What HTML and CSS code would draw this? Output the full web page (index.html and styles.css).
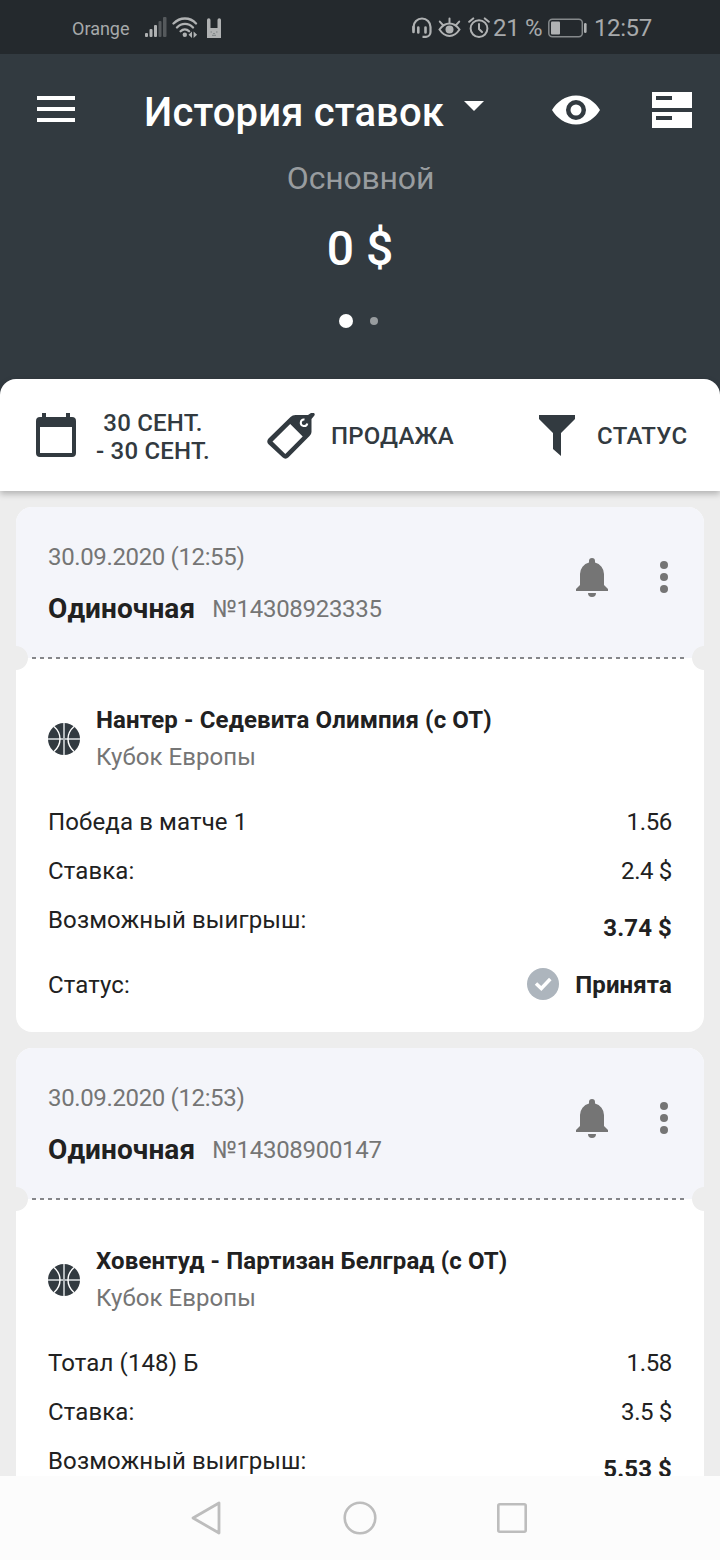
FILE: index.html
```html
<!DOCTYPE html>
<html lang="ru">
<head>
<meta charset="utf-8">
<title>История ставок</title>
<link rel="stylesheet" href="styles.css">
</head>
<body>
<svg class="defs" width="0" height="0" aria-hidden="true">
  <symbol id="ball" viewBox="0 0 32 32">
    <circle cx="16" cy="16" r="16" fill="#323a40"/>
    <path d="M16 0v32M0 16h32" stroke="#b3b8bb" stroke-width="2" fill="none"/>
    <path d="M6 3.500c8 7 8 18 0 25M26 3.500c-8 7-8 18 0 25" stroke="#fff" stroke-width="1.400" fill="none"/>
  </symbol>
  <symbol id="bell" viewBox="0 0 32 39">
    <path d="M16 0a3 3 0 0 1 3 3v1.400A12 12 0 0 1 28 16v11l4 4v2H0v-2l4-4V16A12 12 0 0 1 13 4.400V3a3 3 0 0 1 3-3zM12 35h8a4 4 0 0 1-8 0z" fill="#757575"/>
  </symbol>
  <symbol id="more" viewBox="0 0 8 32">
    <g fill="#757575"><circle cx="4" cy="4" r="4"/><circle cx="4" cy="16" r="4"/><circle cx="4" cy="28" r="4"/></g>
  </symbol>
</svg>
<div class="screen">
  <header class="statusbar">
    <span class="carrier">Orange</span>
    <svg class="ic-signal" width="22" height="22" viewBox="0 0 22 22"><g fill="#b0b2b3"><rect x="0" y="16" width="3" height="4" rx="1"/><rect x="4.500" y="12" width="3" height="8" rx="1"/><rect x="9" y="8" width="3" height="12" rx="1"/></g><g fill="#55595c"><rect x="13.500" y="4" width="3" height="16" rx="1"/><rect x="18" y="0" width="3.500" height="20" rx="1"/></g></svg>
    <svg class="ic-wifi" width="26" height="22" viewBox="0 0 26 22"><g fill="none" stroke="#b0b2b3" stroke-width="2.300" stroke-linecap="round"><path d="M1.500 6.500C8-.2 18-.2 24 6.500M5 10.500c4.500-4.800 11.500-4.800 16 0M8.600 14.300c2.500-2.500 6-2.500 8.500 0"/></g><circle cx="12.800" cy="17.800" r="2.200" fill="#b0b2b3"/><path d="M20 14.500v6.500l-3.500-3.250zM21.600 14.500v6.500l3.500-3.250z" fill="#b0b2b3"/></svg>
    <svg class="ic-bunny" width="16" height="22" viewBox="0 0 16 22"><path d="M1 21V3a1.500 1.500 0 0 1 3.500 0v8h7V3A1.500 1.500 0 0 1 15 3v18z" fill="#b0b2b3"/><path d="M4.500 15H6M10 15h1.500M7.200 16.500h1.600M6 18.300h4" stroke="#7b8083" stroke-width="1"/></svg>
    <svg class="ic-headset" width="20" height="22" viewBox="0 0 20 22"><path d="M1.500 13.500V10a8.500 8.500 0 0 1 17 0v5a4.800 4.800 0 0 1-4.500 4.800H10.500" fill="none" stroke="#b0b2b3" stroke-width="2.200"/><path d="M1.500 10v5M6.300 10.500v5M13.500 10.500v5" stroke="#b0b2b3" stroke-width="2.600" stroke-linecap="round"/></svg>
    <svg class="ic-care" width="23" height="22" viewBox="0 0 23 22"><g fill="none" stroke="#b0b2b3" stroke-width="2" stroke-linecap="round"><path d="M1.500 12.500c5.500-8 14.500-8 20 0c-5.500 8.500-14.500 8.500-20 0zM11.500 1.500v4M1.800 4.600l3 3.300M21.200 4.600l-3 3.300"/></g><circle cx="11.500" cy="12.500" r="4" fill="#b0b2b3"/></svg>
    <svg class="ic-alarm" width="22" height="22" viewBox="0 0 22 22"><g fill="none" stroke="#b0b2b3" stroke-width="2" stroke-linecap="round"><circle cx="11" cy="11.600" r="8.400"/><path d="M11 7v5l3 3M1.200 4.800l4-3.400M20.800 4.800l-4-3.400"/></g></svg>
    <span class="percent">21 %</span>
    <svg class="ic-battery" width="39" height="20" viewBox="0 0 39 20"><rect x=".8" y="1.300" width="33.500" height="17.400" rx="3.500" fill="none" stroke="#85898b" stroke-width="1.500"/><rect x="3" y="3.500" width="9" height="13" rx="1" fill="#b0b2b3"/><rect x="36" y="5" width="2.600" height="10" rx="1.300" fill="#b0b2b3"/></svg>
    <span class="clock">12:57</span>
  </header>

  <section class="top">
    <div class="toolbar">
      <svg class="ic-menu" width="38" height="26" viewBox="0 0 38 26"><path d="M0 2h38M0 13h38M0 24h38" stroke="#fff" stroke-width="4"/></svg>
      <h1 class="title">История ставок</h1>
      <svg class="ic-caret" width="20" height="10" viewBox="0 0 20 10"><path d="M0 0h20L10 10z" fill="#fff"/></svg>
      <svg class="ic-eye" width="48" height="30" viewBox="0 0 48 30"><path fill="#fff" fill-rule="evenodd" d="M0 15C5 7 13 .5 24 .5S43 7 48 15c-5 8-13 14.500-24 14.500S5 23 0 15zM24 5a10 10 0 1 0 0 20a10 10 0 1 0 0-20z"/><circle cx="24" cy="15" r="5.500" fill="#fff"/></svg>
      <svg class="ic-list" width="40" height="36" viewBox="0 0 40 36"><path fill="#fff" fill-rule="evenodd" d="M0 0h40v16H0zM4 4v4h16V4zM0 20h40v16H0zM4 24v4h16v-4z"/></svg>
    </div>
    <div class="account">Основной</div>
    <div class="balance">0 $</div>
    <div class="dots"><i class="dot dot-on"></i><i class="dot"></i></div>
  </section>

  <nav class="filters">
    <svg class="ic-calendar" width="40" height="44" viewBox="0 0 40 44"><path fill="#323a40" fill-rule="evenodd" d="M6 0h4v4h20V0h4v4h2a4 4 0 0 1 4 4v32a4 4 0 0 1-4 4H4a4 4 0 0 1-4-4V8a4 4 0 0 1 4-4h2zM4 14v26h32V14z"/></svg>
    <span class="range">30 СЕНТ.<br>- 30 СЕНТ.</span>
    <svg class="ic-tag" width="48" height="46" viewBox="0 0 48 46"><path fill="#323a40" fill-rule="evenodd" d="M1.500 25.500L23.500 4Q25.500 2 28.500 2H41L44 0A2 2 0 0 1 47 3L44.500 6V19Q44.500 21 42.500 23L21.500 44.300Q18.500 47 15.500 44.300L1.500 31.300Q-1 28.500 1.500 25.500zM5.500 28.500L18.300 41L35.700 23.500L23.200 11z"/><path d="M37.500 6.500A3.300 3.300 0 1 0 40.300 10.500" fill="none" stroke="#fff" stroke-width="2"/></svg>
    <span class="sale">ПРОДАЖА</span>
    <svg class="ic-funnel" width="36" height="41" viewBox="0 0 36 41"><path d="M0 0h36v4L22 18v23l-8-7V18L0 4z" fill="#323a40"/></svg>
    <span class="state">СТАТУС</span>
  </nav>

  <main class="feed">
    <article class="card">
      <div class="card-head">
        <div class="card-info">
          <div class="date">30.09.2020 (12:55)</div>
          <div class="kind"><b class="type">Одиночная</b><span class="number">№14308923335</span></div>
        </div>
        <svg class="ic-bell" width="32" height="39"><use href="#bell"/></svg>
        <svg class="ic-more" width="8" height="32"><use href="#more"/></svg>
        <div class="tear"></div>
      </div>
      <div class="card-body">
        <div class="event">
          <svg class="ic-ball" width="32" height="32"><use href="#ball"/></svg>
          <div><div class="match">Нантер - Седевита Олимпия (с ОТ)</div><div class="league">Кубок Европы</div></div>
        </div>
        <div class="row"><span>Победа в матче 1</span><span class="value">1.56</span></div>
        <div class="row"><span>Ставка:</span><span class="value">2.4 $</span></div>
        <div class="row"><span>Возможный выигрыш:</span><b class="win">3.74 $</b></div>
        <div class="row row-status"><span>Статус:</span><span class="accepted"><svg class="ic-check" width="32" height="32" viewBox="0 0 32 32"><circle cx="16" cy="16" r="16" fill="#adb5bd"/><path d="M9 15.500l5.300 5L23.300 11" fill="none" stroke="#fff" stroke-width="3.500"/></svg><b>Принята</b></span></div>
      </div>
    </article>
    <article class="card">
      <div class="card-head">
        <div class="card-info">
          <div class="date">30.09.2020 (12:53)</div>
          <div class="kind"><b class="type">Одиночная</b><span class="number">№14308900147</span></div>
        </div>
        <svg class="ic-bell" width="32" height="39"><use href="#bell"/></svg>
        <svg class="ic-more" width="8" height="32"><use href="#more"/></svg>
        <div class="tear"></div>
      </div>
      <div class="card-body">
        <div class="event">
          <svg class="ic-ball" width="32" height="32"><use href="#ball"/></svg>
          <div><div class="match">Ховентуд - Партизан Белград (с ОТ)</div><div class="league">Кубок Европы</div></div>
        </div>
        <div class="row"><span>Тотал (148) Б</span><span class="value">1.58</span></div>
        <div class="row"><span>Ставка:</span><span class="value">3.5 $</span></div>
        <div class="row"><span>Возможный выигрыш:</span><b class="win">5.53 $</b></div>
      </div>
    </article>
  </main>

  <footer class="navbar">
    <svg class="ic-back" width="30" height="34" viewBox="0 0 30 34"><path d="M28 2v30L2 17z" fill="none" stroke="#bdbdbd" stroke-width="2.800" stroke-linejoin="round"/></svg>
    <svg class="ic-home" width="34" height="34" viewBox="0 0 34 34"><circle cx="17" cy="17" r="15.300" fill="none" stroke="#bdbdbd" stroke-width="2.600"/></svg>
    <svg class="ic-recent" width="30" height="30" viewBox="0 0 30 30"><rect x="1.300" y="1.300" width="27.400" height="27.400" rx="1.500" fill="none" stroke="#bdbdbd" stroke-width="2.600"/></svg>
  </footer>
</div>
</body>
</html>
```

FILE: styles.css
```css
* { box-sizing: border-box; }
body { margin: 0; font-family: Roboto, "Noto Sans", sans-serif; font-size: 24px; color: #212121; background: #ededed; }
svg { display: block; flex: none; }
.defs { position: absolute; }
.screen { width: 720px; height: 1560px; display: flex; flex-direction: column; overflow: hidden; background: #323a40; }

.statusbar { flex: none; height: 54px; background: #24292d; color: #a7a9ab; display: flex; align-items: center; padding: 2px 0 0 72px; white-space: nowrap; }
.carrier { width: 73px; font-size: 18px; }
.ic-wifi { margin-left: 5px; }
.ic-bunny { margin-left: 8px; }
.ic-headset { margin-left: 190px; }
.ic-care { margin-left: 6px; }
.ic-alarm { margin-left: 7px; }
.percent { width: 55px; margin-left: 3px; letter-spacing: -.3px; }
.clock { margin-left: 7px; letter-spacing: -.4px; }

.top { flex: none; height: 325px; color: #fff; text-align: center; }
.toolbar { display: flex; height: 112px; padding-left: 37px; }
.ic-menu { margin-top: 42px; }
.title { margin: 35px 0 0 69px; width: 300px; font-size: 40px; line-height: 48px; font-weight: 500; letter-spacing: .15px; text-align: left; white-space: nowrap; }
.ic-caret { margin: 47px 0 0 20px; }
.ic-eye { margin: 41px 0 0 68px; }
.ic-list { margin: 38px 0 0 52px; }
.account { margin-top: -8px; height: 40px; line-height: 40px; font-size: 32px; letter-spacing: -.2px; padding-left: 1px; color: #989c9f; }
.balance { margin-top: 23px; line-height: 56px; font-size: 48px; font-weight: 500; }
.dots { margin-top: 37px; height: 14px; padding-right: 4px; display: flex; align-items: center; justify-content: center; gap: 17px; }
.dot { width: 8px; height: 8px; border-radius: 50%; background: #989c9f; }
.dot-on { width: 14px; height: 14px; background: #fff; }

.filters { flex: none; height: 112px; background: #fff; border-radius: 16px 16px 0 0; display: flex; align-items: center; padding-left: 36px; color: #323a40; font-weight: 500; line-height: 28px; letter-spacing: .2px; position: relative; z-index: 1; box-shadow: 0 3px 6px rgba(0,0,0,.25); white-space: nowrap; }
.range { width: 114px; margin: 4px 0 0 20px; text-align: center; }
.ic-tag { margin: 2px 0 0 57px; }
.sale { width: 123px; margin: 2px 0 0 16px; }
.ic-funnel { margin-left: 85px; }
.state { margin: 2px 0 0 22px; letter-spacing: .35px; }

.feed { flex: 1; min-height: 0; overflow: hidden; background: #ededed; padding: 16px 16px 0; display: flex; flex-direction: column; gap: 16px; }
.card { flex: none; height: 525px; border-radius: 16px; background: #fff; overflow: hidden; }
.card-head { position: relative; height: 151px; background: #f4f5fa; padding: 32px 36px 0 32px; display: flex; color: #757575; }
.card-info { flex: 1; }
.date { line-height: 36px; letter-spacing: -.36px; }
.kind { display: flex; gap: 17px; margin-top: 16px; line-height: 36px; }
.type { font-size: 28px; letter-spacing: .1px; color: #212121; }
.number { letter-spacing: -.3px; }
.ic-bell { margin: 19px 52px 0 0; }
.ic-more { margin-top: 22px; }
/* perforated edge with a notch on each side */
.tear { position: absolute; left: 0; right: 0; bottom: -12px; height: 24px; background: radial-gradient(circle at 0 12px, #ededed 11.500px, transparent 12.300px), radial-gradient(circle at 100% 12px, #ededed 11.500px, transparent 12.300px), repeating-linear-gradient(90deg, #85868a 0 4px, transparent 4px 8px) 16px 11px / 652px 2px no-repeat; }
.card-body { padding: 44px 32px 8px; letter-spacing: .12px; }
.event { display: flex; align-items: center; gap: 16px; line-height: 37px; margin-bottom: 22px; }
.match { font-weight: 700; }
.league { color: #757575; letter-spacing: .06px; }
.row { display: flex; justify-content: space-between; height: 49px; line-height: 49px; }
.value { letter-spacing: -.35px; }
.win { padding-top: 8px; }
.row-status { height: 80px; line-height: 80px; }
.accepted { display: flex; align-items: center; gap: 16px; }
.ic-check { margin-top: -2px; }

.navbar { flex: none; height: 84px; background: #fcfcfc; display: flex; align-items: center; padding-left: 191px; }
.ic-home { margin-left: 122px; }
.ic-recent { margin-left: 120px; }
```
